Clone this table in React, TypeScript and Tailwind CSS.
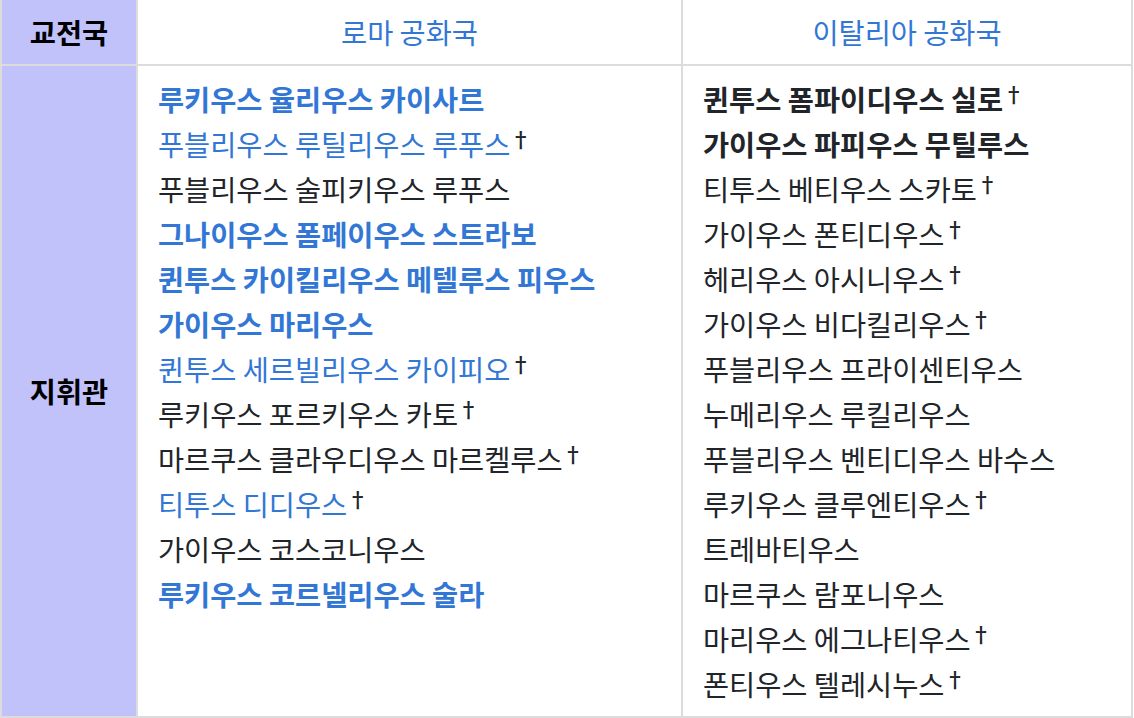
type Person = {
    name: string
    link?: boolean
    bold?: boolean
    dead?: boolean
}

const rome: Person[] = [
    { name: "루키우스 율리우스 카이사르", link: true, bold: true },
    { name: "푸블리우스 루틸리우스 루푸스", link: true, dead: true },
    { name: "푸블리우스 술피키우스 루푸스" },
    { name: "그나이우스 폼페이우스 스트라보", link: true, bold: true },
    { name: "퀸투스 카이킬리우스 메텔루스 피우스", link: true, bold: true },
    { name: "가이우스 마리우스", link: true, bold: true },
    { name: "퀸투스 세르빌리우스 카이피오", link: true, dead: true },
    { name: "루키우스 포르키우스 카토", dead: true },
    { name: "마르쿠스 클라우디우스 마르켈루스", dead: true },
    { name: "티투스 디디우스", link: true, dead: true },
    { name: "가이우스 코스코니우스" },
    { name: "루키우스 코르넬리우스 술라", link: true, bold: true },
];

const italia: Person[] = [
    { name: "퀸투스 폼파이디우스 실로", bold: true, dead: true },
    { name: "가이우스 파피우스 무틸루스", bold: true },
    { name: "티투스 베티우스 스카토", dead: true },
    { name: "가이우스 폰티디우스", dead: true },
    { name: "헤리우스 아시니우스", dead: true },
    { name: "가이우스 비다킬리우스", dead: true },
    { name: "푸블리우스 프라이센티우스" },
    { name: "누메리우스 루킬리우스" },
    { name: "푸블리우스 벤티디우스 바수스" },
    { name: "루키우스 클루엔티우스", dead: true },
    { name: "트레바티우스" },
    { name: "마르쿠스 람포니우스" },
    { name: "마리우스 에그나티우스", dead: true },
    { name: "폰티우스 텔레시누스", dead: true },
];

function PersonList({ people }: { people: Person[] }) {
    return (
        <div className="px-[20px] py-[10px]">
            {people.map((p) => (
                <div
                    key={p.name}
                    className={`h-[45px] leading-[45px] whitespace-nowrap ${p.link ? "text-[#3277d5]" : "text-[#212529]"} ${p.bold ? "font-bold" : "font-normal"}`}
                >
                    {p.name}
                    {p.dead && (
                        <span className="relative top-[-9px] text-[21px] font-medium text-[#212529]">†</span>
                    )}
                </div>
            ))}
        </div>
    );
}

export default function App() {
    return (
        <div className="bg-white w-[1134px] h-[718px] text-[28.4px] font-['Noto_Sans_CJK_KR','Noto_Sans',sans-serif]">
            <div className="grid w-[1133px] grid-cols-[134px_543px_448px] gap-[2px] bg-[#dcdcdc] px-[2px] pb-[2px]">
                <div className="flex h-[64px] items-center justify-center bg-[#c2c2fa] font-bold text-black">교전국</div>
                <div className="flex h-[64px] items-center justify-center bg-white text-[#3277d5]">로마 공화국</div>
                <div className="flex h-[64px] items-center justify-center bg-white text-[#3277d5]">이탈리아 공화국</div>

                <div className="flex items-center justify-center bg-[#c2c2fa] font-bold text-black">지휘관</div>
                <div className="bg-white">
                    <PersonList people={rome} />
                </div>
                <div className="bg-white">
                    <PersonList people={italia} />
                </div>
            </div>
        </div>
    );
}
